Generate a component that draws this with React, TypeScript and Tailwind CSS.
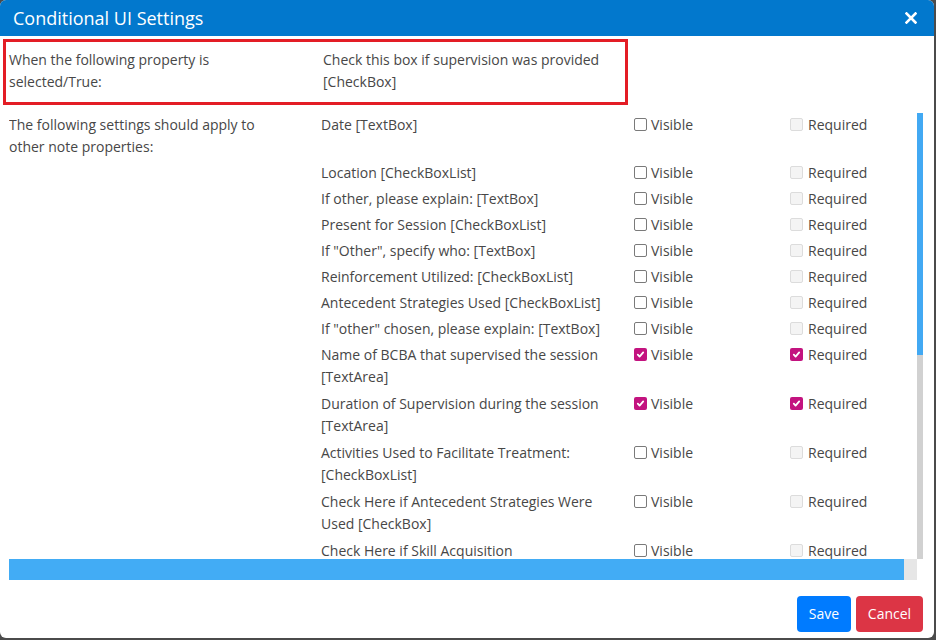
import React from 'react';

type Row = {
  lines: string[];
  checked?: boolean;
};

const rows: Row[] = [
  { lines: ['Date [TextBox]'] },
  { lines: ['Location [CheckBoxList]'] },
  { lines: ['If other, please explain: [TextBox]'] },
  { lines: ['Present for Session [CheckBoxList]'] },
  { lines: ['If "Other", specify who: [TextBox]'] },
  { lines: ['Reinforcement Utilized: [CheckBoxList]'] },
  { lines: ['Antecedent Strategies Used [CheckBoxList]'] },
  { lines: ['If "other" chosen, please explain: [TextBox]'] },
  { lines: ['Name of BCBA that supervised the session', '[TextArea]'], checked: true },
  { lines: ['Duration of Supervision during the session', '[TextArea]'], checked: true },
  { lines: ['Activities Used to Facilitate Treatment:', '[CheckBoxList]'] },
  { lines: ['Check Here if Antecedent Strategies Were', 'Used [CheckBox]'] },
  { lines: ['Check Here if Skill Acquisition'] },
];

const CloseIcon = () => (
  <svg className="h-3 w-3" viewBox="0 0 12 12" fill="none" stroke="white" strokeWidth={2.6} strokeLinecap="square">
    <path d="M1.5 1.5l9 9M10.5 1.5l-9 9" />
  </svg>
);

const Box = ({ checked, disabled }: { checked?: boolean; disabled?: boolean }) => {
  if (checked) {
    return (
      <span className="mt-[4px] flex h-[13px] w-[13px] shrink-0 items-center justify-center rounded-[2px] bg-[#c3137f]">
        <svg className="h-[9px] w-[9px]" viewBox="0 0 10 10" fill="none" stroke="white" strokeWidth={2} strokeLinecap="round" strokeLinejoin="round">
          <path d="M2 5.2l2 2.1L8 2.6" />
        </svg>
      </span>
    );
  }
  return (
    <span
      className={
        disabled
          ? 'mt-[4px] h-[13px] w-[13px] shrink-0 rounded-[2px] border border-[#dcdcdc] bg-[#f4f4f4]'
          : 'mt-[4px] h-[13px] w-[13px] shrink-0 rounded-[2px] border border-[#7a7a7a] bg-white'
      }
    />
  );
};

export default function App() {
  return (
    <div className="h-[640px] w-[936px] bg-[#4b4b4b] font-['Open_Sans',sans-serif] text-[14px] leading-[22px] text-[#474747]">
      <div className="flex h-[638px] w-[934px] flex-col overflow-hidden rounded-md bg-white">
        {/* Header */}
        <div className="flex h-9 shrink-0 items-center justify-between bg-[#0278cd] pl-[13px] pr-[17px]">
          <h2 className="text-[18px] leading-none text-white">Conditional UI Settings</h2>
          <CloseIcon />
        </div>

        {/* Trigger property */}
        <div className="ml-[3px] mt-[3px] flex h-[66px] w-[625px] shrink-0 border-[3px] border-[#e31d25] pl-[3px] pt-[7px]">
          <div className="w-[314px]">
            When the following property is
            <br />
            selected/True:
          </div>
          <div>
            Check this box if supervision was provided
            <br />
            [CheckBox]
          </div>
        </div>

        {/* Scroll area */}
        <div className="ml-[9px] mt-[7px] flex h-[447px] w-[914px] shrink-0">
          <div className="w-[908px] overflow-hidden">
            {rows.map((row, i) => (
              <div
                key={i}
                className={
                  row.lines.length > 1
                    ? 'grid grid-cols-[312px_313px_156px_1fr] pb-[3px] pt-[2px]'
                    : 'grid grid-cols-[312px_313px_156px_1fr] py-[2px]'
                }
              >
                <div>
                  {i === 0 && (
                    <>
                      The following settings should apply to
                      <br />
                      other note properties:
                    </>
                  )}
                </div>
                <div className="whitespace-nowrap">
                  {row.lines.map((l, j) => (
                    <div key={j}>{l}</div>
                  ))}
                </div>
                <div className="flex items-start gap-[4px]">
                  <Box checked={row.checked} />
                  <span>Visible</span>
                </div>
                <div className="flex items-start gap-[5px]">
                  <Box checked={row.checked} disabled={!row.checked} />
                  <span>Required</span>
                </div>
              </div>
            ))}
          </div>
          <div className="mt-[1px] flex w-[6px] flex-col">
            <div className="h-[242px] bg-[#42a9f3]" />
            <div className="flex-1 bg-[#d1d1d1]" />
          </div>
        </div>
        <div className="ml-[9px] flex h-[21px] w-[908px] shrink-0">
          <div className="w-[895px] bg-[#42acf5]" />
          <div className="flex-1 bg-[#e6e6e6]" />
        </div>

        {/* Footer */}
        <div className="mt-[16px] flex justify-end gap-[5px] pr-[11px]">
          <button type="button" className="h-9 w-[54px] rounded bg-[#007bff] text-[14px] text-white">
            Save
          </button>
          <button type="button" className="h-9 w-[67px] rounded bg-[#dc3545] text-[14px] text-white">
            Cancel
          </button>
        </div>
      </div>
    </div>
  );
}
